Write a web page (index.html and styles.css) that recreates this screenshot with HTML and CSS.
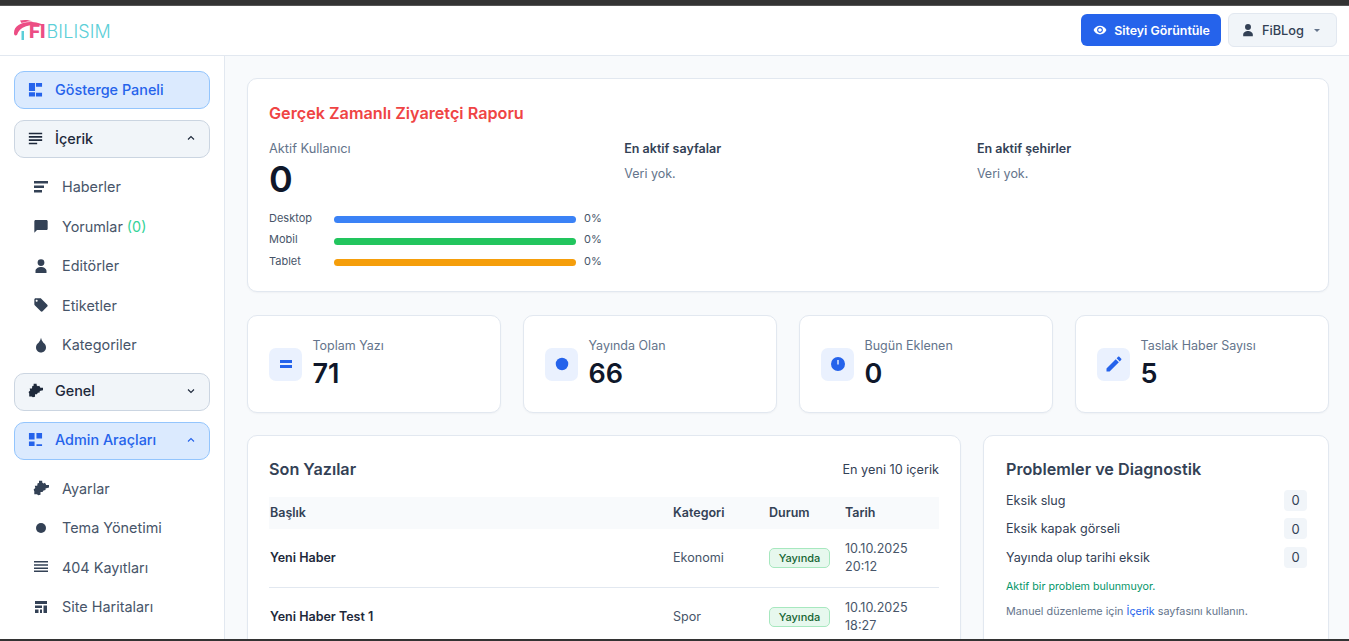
FILE: index.html
```html
<!DOCTYPE html>
<html lang="tr">
<head>
    <meta charset="UTF-8">
    <meta name="viewport" content="width=device-width, initial-scale=1.0">
    <title>Gösterge Paneli</title>
    <link rel="stylesheet" href="styles.css">
</head>
<body>
    <svg class="sprite" width="0" height="0">
        <symbol id="i-dash" viewBox="0 0 16 16"><path d="M1 1h6.500v8.500H1zM8.500 1H15v4H8.500zM1 11h6.500v4.500H1zM8.500 11.500H15v4H8.500z"/></symbol>
        <symbol id="i-dash2" viewBox="0 0 16 16"><path d="M1 1h6v7H1zM9 1h6v6H9zM1 10h6v5H1zM9 13h6v2H9z"/></symbol>
        <symbol id="i-subject" viewBox="3 3 18 18"><path d="M14 17H4v2h10v-2zm6-8H4v2h16V9zM4 15h16v-2H4v2zM4 5v2h16V5H4z"/></symbol>
        <symbol id="i-news" viewBox="0 0 16 16"><path d="M1 2h14v2.500H1zM1 6.500h10V9H1zM1 11h8v2.500H1z"/></symbol>
        <symbol id="i-chat" viewBox="0 0 24 24"><path d="M20 3H4c-1.100 0-2 .9-2 2v17l4-4h14c1.100 0 2-.9 2-2V5c0-1.100-.9-2-2-2z"/></symbol>
        <symbol id="i-person" viewBox="0 0 16 16"><path d="M8 1.200a3.400 3.400 0 1 1 0 6.800 3.400 3.400 0 0 1 0-6.800zM2.500 15v-2.200C2.500 10.600 5.500 9 8 9s5.500 1.600 5.500 3.800V15z"/></symbol>
        <symbol id="i-tag" viewBox="0 0 24 24"><path d="M21.410 11.580l-9-9C12.050 2.220 11.550 2 11 2H4c-1.100 0-2 .9-2 2v7c0 .55.22 1.050.59 1.420l9 9c.36.36.86.58 1.410.58.55 0 1.050-.22 1.410-.59l7-7c.37-.36.59-.86.59-1.410 0-.55-.23-1.060-.59-1.420zM5.500 7C4.670 7 4 6.330 4 5.500S4.670 4 5.500 4 7 4.670 7 5.500 6.330 7 5.500 7z"/></symbol>
        <symbol id="i-drop" viewBox="0 0 16 16"><path d="M8 .8c.5 2 1 3 1.800 4 .4.6.5 1 .9 1.300C12 7 13 8.300 13 10.500 13 13.300 10.800 15.500 8 15.500s-5-2.200-5-5c0-2.200 1-3.500 2.300-4.400.4-.3.5-.7.9-1.300C7 3.800 7.500 2.800 8 .8z"/></symbol>
        <symbol id="i-piece" viewBox="0 0 16 16"><path d="M6 .8h3.200v1.700l1.300 1L12 2.800l1.200 2.200H16v2.600l-3.500 1V10l-2 .5-1 1.500H7.500v2.700l-2.300.6-1.200-1H1.300v-3L.6 9.500 2.300 8 1.800 5.800h2.400l.4-2.500L6 3z"/></symbol>
        <symbol id="i-circle" viewBox="0 0 16 16"><circle cx="8" cy="8" r="5"/></symbol>
        <symbol id="i-lines" viewBox="0 0 16 16"><path d="M1 2h14v1.500H1zM1 5.200h14v1.500H1zM1 8.400h14v1.500H1zM1 11.600h14v1.500H1z"/></symbol>
        <symbol id="i-web" viewBox="0 0 16 16"><path d="M2 2h12v3H2zM2 6.500h7v2.500H2zM2 10.500h3.500V14H2zM7 10.500h2V14H7zM10.500 6.500H14V14h-3.500z"/></symbol>
        <symbol id="i-eye" viewBox="0 0 24 24"><path d="M12 4.500C7 4.500 2.730 7.610 1 12c1.730 4.390 6 7.500 11 7.500s9.270-3.110 11-7.500c-1.730-4.390-6-7.500-11-7.500zM12 17c-2.760 0-5-2.240-5-5s2.240-5 5-5 5 2.240 5 5-2.240 5-5 5zm0-8c-1.660 0-3 1.340-3 3s1.340 3 3 3 3-1.340 3-3-1.340-3-3-3z"/></symbol>
        <symbol id="i-pencil" viewBox="0 0 24 24"><path d="M3 17.250V21h3.750L17.810 9.940l-3.750-3.750L3 17.250zM20.710 7.040c.39-.39.39-1.020 0-1.410l-2.340-2.340c-.39-.39-1.020-.39-1.410 0l-1.830 1.830 3.750 3.750 1.830-1.830z"/></symbol>
        <symbol id="i-up" viewBox="0 0 16 16"><path d="M4 10l4-4 4 4" fill="none" stroke="currentColor" stroke-width="1.500"/></symbol>
        <symbol id="i-down" viewBox="0 0 16 16"><path d="M4 6l4 4 4-4" fill="none" stroke="currentColor" stroke-width="1.500"/></symbol>
    </svg>

    <div class="topstrip"></div>

    <header class="topbar">
        <a class="logo" href="#">
            <svg class="logo-mark" viewBox="0 0 32 22">
                <path d="M0 14C0 7 7 3 16 3c6 0 11 1 14 4-6-1.500-13-1.500-18 .3-5 1.700-8 4.700-9 8.700-2 1-3 0-3-2z" fill="#ec4d84"/>
                <path d="M6 1.500C10 .5 15 .7 19 2.500 14 2.200 10 2.700 7.500 4z" fill="#ec4d84"/>
                <path d="M7.500 12H10v9H7.500z" fill="#5ccfd8"/>
            </svg>
            <span class="logo-fi">FI</span><span class="logo-name">BILISIM</span>
        </a>
        <div class="topbar-actions">
            <a class="btn-site" href="#"><svg class="ic-eye"><use href="#i-eye"/></svg>Siteyi Görüntüle</a>
            <button class="btn-user"><svg class="ic-user"><use href="#i-person"/></svg>FiBLog<span class="caret"></span></button>
        </div>
    </header>

    <div class="shell">
        <aside class="sidebar">
            <a class="nav-main active" href="#"><svg class="nav-ic"><use href="#i-dash"/></svg>Gösterge Paneli</a>

            <a class="nav-main" href="#"><svg class="nav-ic"><use href="#i-subject"/></svg>İçerik<svg class="chev"><use href="#i-up"/></svg></a>
            <ul class="subnav">
                <li><svg class="sub-ic"><use href="#i-news"/></svg>Haberler</li>
                <li><svg class="sub-ic"><use href="#i-chat"/></svg>Yorumlar&nbsp;<span class="count">(0)</span></li>
                <li><svg class="sub-ic"><use href="#i-person"/></svg>Editörler</li>
                <li><svg class="sub-ic"><use href="#i-tag"/></svg>Etiketler</li>
                <li><svg class="sub-ic"><use href="#i-drop"/></svg>Kategoriler</li>
            </ul>

            <a class="nav-main" href="#"><svg class="nav-ic"><use href="#i-piece"/></svg>Genel<svg class="chev"><use href="#i-down"/></svg></a>

            <a class="nav-main active" href="#"><svg class="nav-ic"><use href="#i-dash2"/></svg>Admin Araçları<svg class="chev"><use href="#i-up"/></svg></a>
            <ul class="subnav">
                <li><svg class="sub-ic"><use href="#i-piece"/></svg>Ayarlar</li>
                <li><svg class="sub-ic"><use href="#i-circle"/></svg>Tema Yönetimi</li>
                <li><svg class="sub-ic"><use href="#i-lines"/></svg>404 Kayıtları</li>
                <li><svg class="sub-ic"><use href="#i-web"/></svg>Site Haritaları</li>
            </ul>
        </aside>

        <main class="content">
            <section class="card report">
                <h2 class="report-title">Gerçek Zamanlı Ziyaretçi Raporu</h2>
                <div class="report-grid">
                    <div>
                        <p class="report-label">Aktif Kullanıcı</p>
                        <p class="report-value">0</p>
                        <div class="device"><span>Desktop</span><div class="bar blue"></div><span class="pct">0%</span></div>
                        <div class="device"><span>Mobil</span><div class="bar green"></div><span class="pct">0%</span></div>
                        <div class="device"><span>Tablet</span><div class="bar orange"></div><span class="pct">0%</span></div>
                    </div>
                    <div>
                        <h3 class="report-sub">En aktif sayfalar</h3>
                        <p class="no-data">Veri yok.</p>
                    </div>
                    <div>
                        <h3 class="report-sub">En aktif şehirler</h3>
                        <p class="no-data">Veri yok.</p>
                    </div>
                </div>
            </section>

            <section class="stats">
                <div class="card stat">
                    <div class="stat-ic"><svg class="ic-equal" viewBox="0 0 12 8"><path d="M0 0h12v3H0zM0 5h12v3H0z"/></svg></div>
                    <div><p class="stat-label">Toplam Yazı</p><p class="stat-value">71</p></div>
                </div>
                <div class="card stat">
                    <div class="stat-ic"><svg class="ic-stat"><use href="#i-circle"/></svg></div>
                    <div><p class="stat-label">Yayında Olan</p><p class="stat-value">66</p></div>
                </div>
                <div class="card stat">
                    <div class="stat-ic"><svg class="ic-clock" viewBox="0 0 16 16"><path fill-rule="evenodd" d="M8 1a7 7 0 1 0 0 14A7 7 0 0 0 8 1zM7.300 4h1.400v4.500H7.300z"/></svg></div>
                    <div><p class="stat-label">Bugün Eklenen</p><p class="stat-value">0</p></div>
                </div>
                <div class="card stat">
                    <div class="stat-ic"><svg class="ic-stat"><use href="#i-pencil"/></svg></div>
                    <div><p class="stat-label">Taslak Haber Sayısı</p><p class="stat-value">5</p></div>
                </div>
            </section>

            <section class="lower">
                <div class="card posts">
                    <div class="posts-head">
                        <h2 class="card-title">Son Yazılar</h2>
                        <span class="posts-note">En yeni 10 içerik</span>
                    </div>
                    <table class="posts-table">
                        <thead>
                            <tr><th>Başlık</th><th>Kategori</th><th>Durum</th><th>Tarih</th></tr>
                        </thead>
                        <tbody>
                            <tr>
                                <td class="post-name">Yeni Haber</td>
                                <td>Ekonomi</td>
                                <td><span class="badge">Yayında</span></td>
                                <td>10.10.2025<br>20:12</td>
                            </tr>
                            <tr>
                                <td class="post-name">Yeni Haber Test 1</td>
                                <td>Spor</td>
                                <td><span class="badge">Yayında</span></td>
                                <td>10.10.2025<br>18:27</td>
                            </tr>
                        </tbody>
                    </table>
                </div>

                <div class="card diag">
                    <h2 class="card-title">Problemler ve Diagnostik</h2>
                    <div class="diag-row"><span>Eksik slug</span><span class="diag-num">0</span></div>
                    <div class="diag-row"><span>Eksik kapak görseli</span><span class="diag-num">0</span></div>
                    <div class="diag-row"><span>Yayında olup tarihi eksik</span><span class="diag-num">0</span></div>
                    <p class="diag-ok">Aktif bir problem bulunmuyor.</p>
                    <p class="diag-help">Manuel düzenleme için <a href="#">İçerik</a> sayfasını kullanın.</p>
                </div>
            </section>
        </main>
    </div>

    <div class="bottomstrip"></div>
</body>
</html>
```

FILE: styles.css
```css
* {
    margin: 0;
    padding: 0;
    box-sizing: border-box;
}
body {
    height: 100vh;
    display: flex;
    flex-direction: column;
    overflow: hidden;
    background: #f8fafc;
    font-family: "Inter", "Liberation Sans", sans-serif;
    color: #334155;
}
a {
    text-decoration: none;
}
ul {
    list-style: none;
}
svg {
    fill: currentColor;
    flex-shrink: 0;
}
.sprite {
    position: absolute;
}
.topstrip {
    height: 6px;
    flex-shrink: 0;
    background: #333333;
    border-bottom: 1px solid #555555;
}
.bottomstrip {
    height: 2px;
    flex-shrink: 0;
    background: #333333;
}

/* ust bar */
.topbar {
    height: 50px;
    flex-shrink: 0;
    display: flex;
    justify-content: space-between;
    align-items: center;
    padding: 0 12px 1px 14px;
    background: #ffffff;
    border-bottom: 1px solid #e2e8f0;
}
.logo {
    display: flex;
    align-items: flex-end;
    height: 22px;
    font-size: 18px;
    line-height: 18px;
}
.logo-mark {
    width: 32px;
    height: 22px;
    margin-right: -17px;
}
.logo-fi {
    font-size: 19px;
    font-weight: 800;
    color: #ec4d84;
    margin-right: 1px;
}
.logo-name {
    color: #5ccfd8;
    font-weight: 300;
    letter-spacing: 0.1px;
}
.topbar-actions {
    display: flex;
    align-items: center;
    gap: 7px;
}
.btn-site {
    height: 32px;
    display: flex;
    align-items: center;
    gap: 7px;
    padding: 0 11px 0 12px;
    border-radius: 6px;
    background: #2563eb;
    color: #ffffff;
    font-size: 12.400px;
    font-weight: 600;
}
.ic-eye {
    width: 14px;
    height: 14px;
}
.btn-user {
    height: 34px;
    display: flex;
    align-items: center;
    padding: 0 16px 0 12px;
    border: 1px solid #e2e8f0;
    border-radius: 6px;
    background: #f1f5f9;
    color: #334155;
    font-family: inherit;
    font-size: 12.800px;
    font-weight: 500;
}
.ic-user {
    width: 14px;
    height: 14px;
    margin-right: 7px;
}
.caret {
    margin-left: 10px;
    border: 3px solid transparent;
    border-top: 3px solid #64748b;
    border-bottom: 0;
}

/* sol menu */
.shell {
    flex: 1;
    min-height: 0;
    display: flex;
}
.sidebar {
    width: 225px;
    flex-shrink: 0;
    padding: 15px 14px 0;
    background: #ffffff;
    border-right: 1px solid #e2e8f0;
}
.nav-main {
    height: 38px;
    display: flex;
    align-items: center;
    margin-bottom: 11px;
    padding: 0 12px 2px 13px;
    border: 1px solid #cbd5e1;
    border-radius: 10px;
    background: #f1f5f9;
    color: #1e293b;
    font-size: 14.400px;
    font-weight: 500;
}
.nav-main.active {
    background: #dbeafe;
    border-color: #93c5fd;
    color: #2563eb;
}
.nav-ic {
    width: 15px;
    height: 15px;
    margin-right: 12px;
}
.chev {
    width: 12px;
    height: 12px;
    margin-left: auto;
}
.subnav {
    margin-top: -2px;
    margin-bottom: 8px;
    padding-left: 19px;
}
.subnav li {
    height: 39.500px;
    display: flex;
    align-items: center;
    color: #475569;
    font-size: 14.400px;
}
.sub-ic {
    width: 16px;
    height: 16px;
    margin-right: 13px;
    color: #334155;
}
.count {
    color: #34d399;
}

/* icerik */
.content {
    flex: 1;
    min-width: 0;
    padding: 22px 20px 0 22px;
    overflow: hidden;
}
.card {
    background: #ffffff;
    border: 1px solid #e2e8f0;
    border-radius: 10px;
    box-shadow: 0 1px 2px rgba(15, 23, 42, 0.04);
}
.report {
    height: 214px;
    padding: 24px 21px 0;
}
.report-title {
    font-size: 16.200px;
    line-height: 20px;
    font-weight: 600;
    color: #ef4444;
    margin-bottom: 18px;
}
.report-grid {
    display: grid;
    grid-template-columns: repeat(3, 1fr);
    column-gap: 22.500px;
}
.report-label {
    font-size: 12.800px;
    line-height: 16px;
    color: #64748b;
}
.report-value {
    font-size: 36px;
    line-height: 44px;
    font-weight: 600;
    color: #0f172a;
    margin-bottom: 6px;
}
.device {
    height: 21.500px;
    display: grid;
    grid-template-columns: 65px 242px auto;
    align-items: center;
    font-size: 11px;
    color: #475569;
}
.bar {
    height: 7px;
    margin-top: 4px;
    border-radius: 4px;
}
.bar.blue {
    background: #3b82f6;
}
.bar.green {
    background: #22c55e;
}
.bar.orange {
    background: #f59e0b;
}
.pct {
    margin-left: 8px;
}
.report-sub {
    font-size: 12.500px;
    line-height: 16px;
    font-weight: 600;
    color: #334155;
    margin-bottom: 9px;
}
.no-data {
    font-size: 12.500px;
    line-height: 16px;
    color: #64748b;
}
.stats {
    display: grid;
    grid-template-columns: repeat(4, 1fr);
    column-gap: 22px;
    margin-top: 23px;
}
.stat {
    height: 98px;
    display: flex;
    align-items: center;
    gap: 10.500px;
    padding: 0 21px;
}
.stat-ic {
    width: 33px;
    height: 33px;
    display: flex;
    justify-content: center;
    align-items: center;
    border-radius: 7px;
    background: #eaf1fe;
    color: #2563eb;
}
.ic-stat {
    width: 20px;
    height: 20px;
}
.ic-equal {
    width: 12px;
    height: 8px;
}
.ic-clock {
    width: 16px;
    height: 16px;
}
.stat-label {
    font-size: 12.500px;
    line-height: 18px;
    color: #64748b;
    margin-bottom: 2px;
}
.stat-value {
    font-size: 27px;
    line-height: 34px;
    font-weight: 600;
    color: #0f172a;
}
.lower {
    display: grid;
    grid-template-columns: 714px 1fr;
    column-gap: 22px;
    margin-top: 22px;
    align-items: start;
}
.card-title {
    font-size: 16.200px;
    line-height: 20px;
    font-weight: 600;
    color: #334155;
}
.posts {
    padding: 23px 21px 0;
    height: 300px;
}
.posts-head {
    display: flex;
    justify-content: space-between;
    align-items: center;
    margin-bottom: 18px;
}
.posts-note {
    font-size: 12.700px;
    color: #334155;
}
.posts-table {
    width: 100%;
    border-collapse: collapse;
    table-layout: fixed;
    font-size: 12.600px;
}
.posts-table th {
    height: 32px;
    padding: 0 1px 2px;
    background: #f8fafc;
    text-align: left;
    font-size: 12.500px;
    font-weight: 600;
    color: #334155;
}
.posts-table th:nth-child(1) {
    width: 403px;
}
.posts-table th:nth-child(2) {
    width: 96px;
}
.posts-table th:nth-child(3) {
    width: 76px;
}
.posts-table td {
    height: 58px;
    padding: 0 1px;
    color: #475569;
    line-height: 18px;
    border-bottom: 1px solid #e2e8f0;
}
.posts-table tr + tr td {
    height: 60px;
}
.posts-table td.post-name {
    font-weight: 600;
    font-size: 12.500px;
    color: #1e293b;
}
.badge {
    display: inline-block;
    width: 61px;
    height: 20px;
    border: 1px solid #a7e8bf;
    border-radius: 5px;
    background: #e7f8ee;
    color: #166534;
    font-size: 11px;
    font-weight: 500;
    line-height: 18px;
    text-align: center;
}
.diag {
    height: 300px;
    padding: 23px 21px 0 22px;
}
.diag .card-title {
    margin-bottom: 7px;
}
.diag-row {
    height: 28.500px;
    display: flex;
    justify-content: space-between;
    align-items: center;
    font-size: 12.600px;
    color: #334155;
}
.diag-num {
    width: 23px;
    height: 21px;
    display: flex;
    justify-content: center;
    align-items: center;
    border-radius: 4px;
    background: #f1f5f9;
    font-size: 13px;
}
.diag-ok {
    margin-top: 7px;
    font-size: 10.700px;
    line-height: 16px;
    color: #059669;
}
.diag-help {
    margin-top: 9px;
    font-size: 10.800px;
    line-height: 16px;
    color: #64748b;
}
.diag-help a {
    color: #2563eb;
}
```
